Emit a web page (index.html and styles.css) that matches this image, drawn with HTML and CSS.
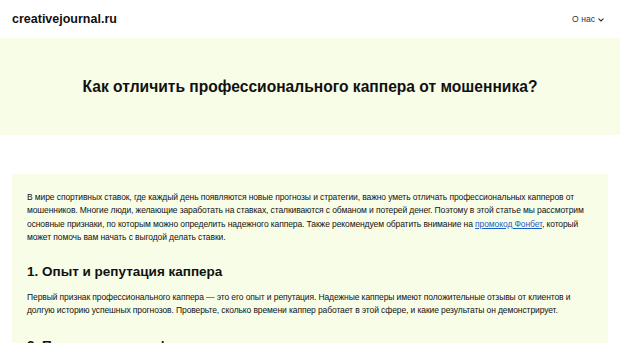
FILE: index.html
```html
<!DOCTYPE html>
<html lang="ru">
<head>
    <meta charset="UTF-8">
    <meta name="viewport" content="width=device-width, initial-scale=1.0">
    <title>Как отличить профессионального каппера от мошенника?</title>
    <link rel="stylesheet" href="styles.css">
</head>
<body>
    <header class="site-header">
        <a class="logo" href="#">creativejournal.ru</a>
        <nav class="nav">
            <a class="nav-item" href="#">О нас
                <svg class="chevron" width="6" height="4" viewBox="0 0 6 4" fill="none" stroke="currentColor" stroke-width="1.1" stroke-linecap="round" stroke-linejoin="round">
                    <polyline points="0.8 0.8 3 3 5.2 0.8"></polyline>
                </svg>
            </a>
        </nav>
    </header>

    <section class="hero">
        <h1>Как отличить профессионального каппера от мошенника?</h1>
    </section>

    <main class="content">
        <article class="article">
            <p>В мире спортивных ставок, где каждый день появляются новые прогнозы и стратегии, важно уметь отличать профессиональных капперов от мошенников. Многие люди, желающие заработать на ставках, сталкиваются с обманом и потерей денег. Поэтому в этой статье мы рассмотрим основные признаки, по которым можно определить надежного каппера. Также рекомендуем обратить внимание на <a href="#">промокод Фонбет</a>, который может помочь вам начать с выгодой делать ставки.</p>

            <h2>1. Опыт и репутация каппера</h2>
            <p>Первый признак профессионального каппера — это его опыт и репутация. Надежные капперы имеют положительные отзывы от клиентов и долгую историю успешных прогнозов. Проверьте, сколько времени каппер работает в этой сфере, и какие результаты он демонстрирует.</p>

            <h2>2. Прозрачность информации</h2>
            <p>Профессиональные капперы всегда открыто публикуют статистику своих прогнозов.</p>
        </article>
    </main>
</body>
</html>
```

FILE: styles.css
```css
body {
    font-family: "Liberation Sans", Arial, sans-serif;
    color: #111;
    background-color: #fff;
    margin: 0;
}

a {
    color: inherit;
    text-decoration: none;
}

/* Header */
.site-header {
    display: flex;
    align-items: center;
    justify-content: space-between;
    height: 38px;
    padding: 0 16px 0 12px;
}

.logo {
    font-size: 12.5px;
    font-weight: 700;
    color: #111;
}

.nav-item {
    display: flex;
    align-items: center;
    gap: 3px;
    font-size: 8.6px;
    color: #333;
}

.chevron {
    margin-top: 1px;
}

/* Hero */
.hero {
    background-color: #f8fde8;
    height: 97px;
    display: flex;
    align-items: center;
    justify-content: center;
}

.hero h1 {
    margin: 0;
    font-size: 15.6px;
    font-weight: 700;
    color: #111;
}

/* Content */
.content {
    padding: 39px 12px 0;
}

.article {
    background-color: #f8fde8;
    padding: 17px 15px 20px;
}

.article p {
    margin: 0 0 20px;
    font-size: 8.5px;
    line-height: 13.3px;
    letter-spacing: -0.1px;
    color: #111;
}

.article p a {
    color: #1d5fc9;
    text-decoration: underline;
}

.article h2 {
    margin: 0 0 12px;
    font-size: 13.5px;
    font-weight: 700;
    color: #111;
}
```
